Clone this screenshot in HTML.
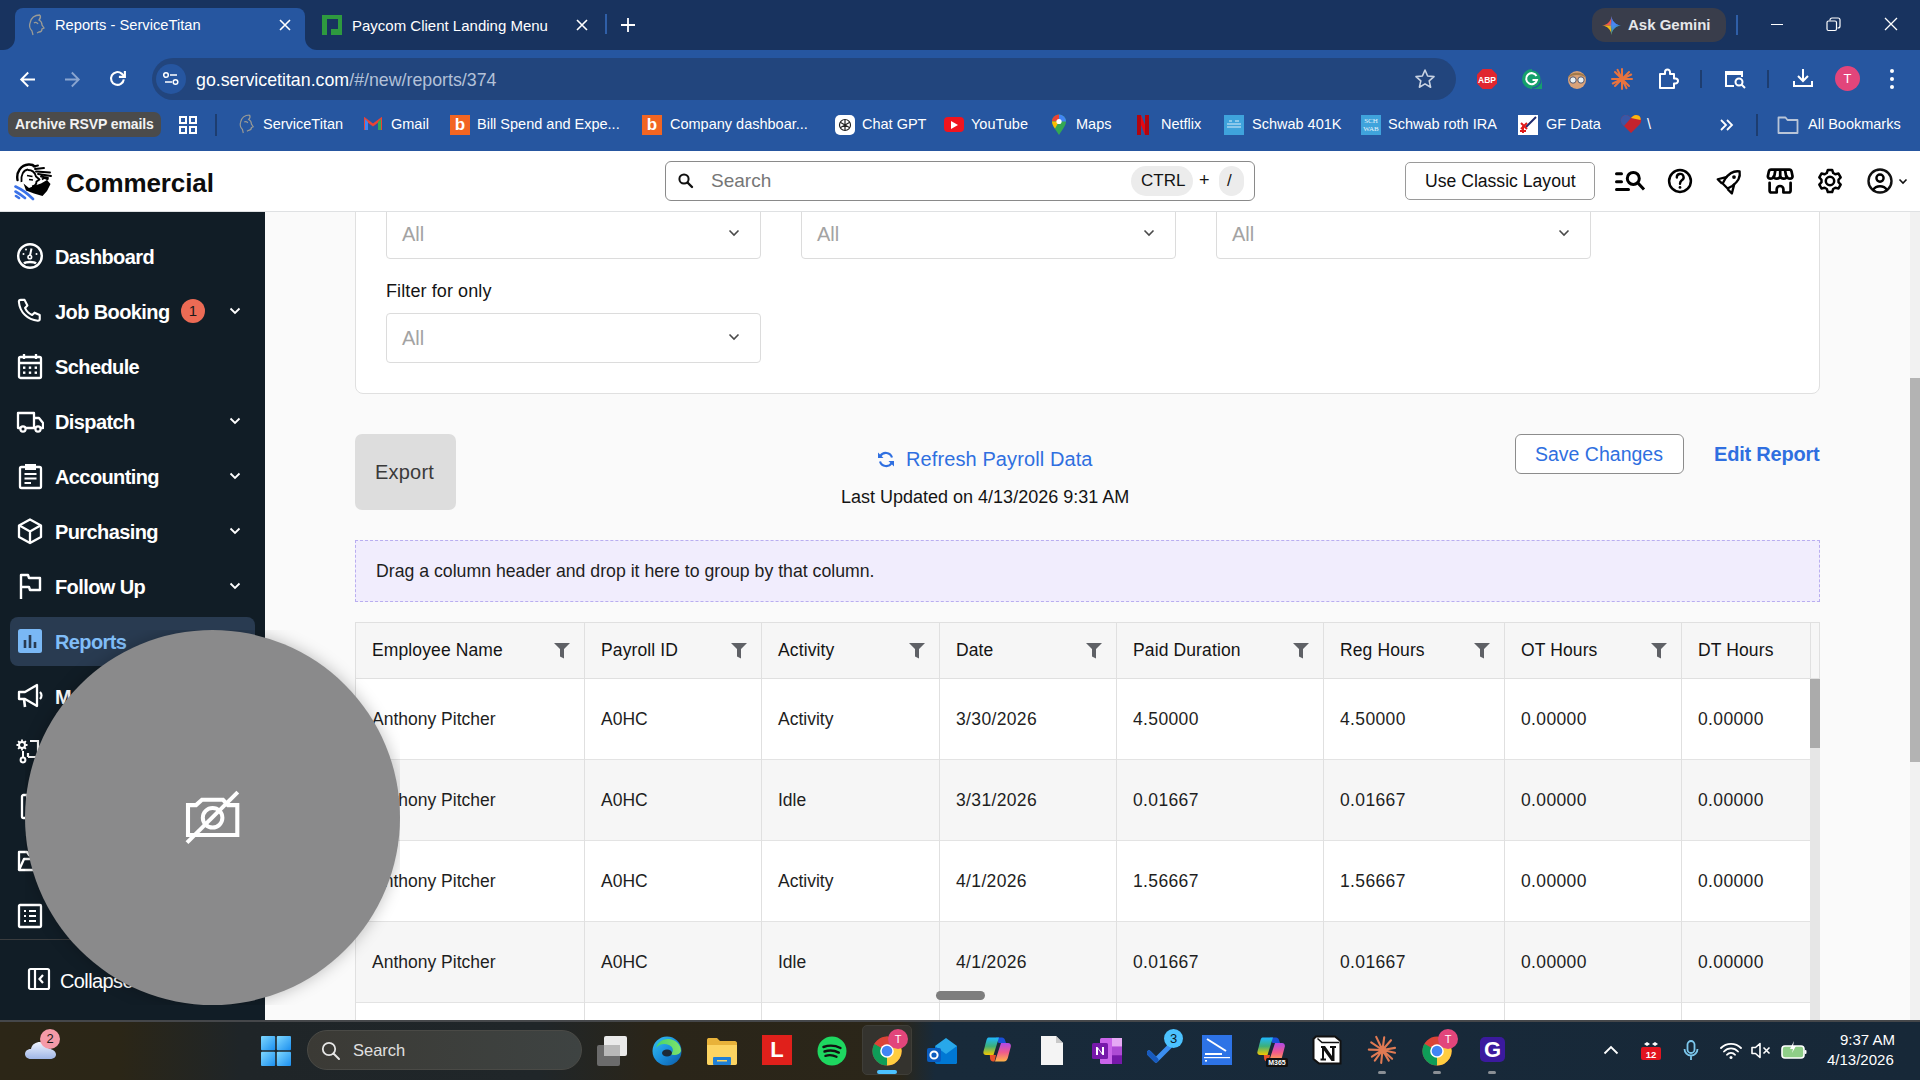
<!DOCTYPE html>
<html><head><meta charset="utf-8">
<style>
*{box-sizing:border-box;margin:0;padding:0}
html,body{width:1920px;height:1080px;overflow:hidden;font-family:"Liberation Sans",sans-serif;background:#fafafa}
.a{position:absolute}
#tabs{left:0;top:0;width:1920px;height:50px;background:#18335f}
#toolbar{left:0;top:50px;width:1920px;height:101px;background:#2656a0}
#hdr{left:0;top:151px;width:1920px;height:61px;background:#fff;border-bottom:1px solid #dfe1e3}
#side{left:0;top:212px;width:265px;height:808px;background:#111d26;overflow:hidden}
#content{left:265px;top:212px;width:1655px;height:808px;background:#fafafa;overflow:hidden}
#taskbar{left:0;top:1020px;width:1920px;height:60px;background:linear-gradient(90deg,#2c2617 0px,#2b2617 120px,#1f2528 240px,#202629 540px,#2a2519 650px,#2b2619 900px,#182a3a 935px,#172838 1920px)}
.t{white-space:nowrap}
.th{top:428px;font-size:17.5px;color:#141414;letter-spacing:0.12px}
.td{font-size:17.5px;color:#1e1e1e}
.sl{left:55px;font-size:20px;font-weight:bold;color:#fff;letter-spacing:-0.6px}
.bk{top:66px;font-size:14.5px;color:#fff}
</style></head><body>
<div id="tabs" class="a">
  <!-- active tab -->
  <div class="a" style="left:15px;top:8px;width:290px;height:42px;background:#2656a0;border-radius:8px 8px 0 0"></div>
  <div class="a" style="left:3px;top:38px;width:12px;height:12px;background:#2656a0;overflow:hidden"><div class="a" style="left:-12px;top:-12px;width:24px;height:24px;border-radius:50%;background:#18335f"></div></div>
  <div class="a" style="left:305px;top:38px;width:12px;height:12px;background:#2656a0;overflow:hidden"><div class="a" style="left:0;top:-12px;width:24px;height:24px;border-radius:50%;background:#18335f"></div></div>
  <svg class="a" style="left:26px;top:14px" width="20" height="22" viewBox="0 0 20 22"><path d="M14 1c-5 0-9 3-10 8-1 3 0 6 2 8l1 4m7-20c1 2 0 4-1 5 2 1 3 3 3 5l2 3-2 1c0 2-1 3-3 3l-2 1M8 9c1-1 3-1 4 1" fill="none" stroke="#9b9b95" stroke-width="1.3"/></svg>
  <div class="a t" style="left:55px;top:17px;font-size:14.7px;color:#fff">Reports - ServiceTitan</div>
  <svg class="a" style="left:279px;top:19px" width="12" height="12" viewBox="0 0 12 12"><path d="M1 1L11 11M11 1L1 11" stroke="#fff" stroke-width="1.6"/></svg>
  <!-- paycom tab -->
  <div class="a" style="left:322px;top:15px;width:20px;height:20px;background:#2e9a3f"></div>
  <div class="a" style="left:327px;top:19px;width:11px;height:10px;background:#18335f"></div>
  <div class="a" style="left:327px;top:29px;width:4px;height:6px;background:#18335f"></div>
  <div class="a t" style="left:352px;top:17px;font-size:15px;color:#fff">Paycom Client Landing Menu</div>
  <svg class="a" style="left:576px;top:19px" width="12" height="12" viewBox="0 0 12 12"><path d="M1 1L11 11M11 1L1 11" stroke="#fff" stroke-width="1.6"/></svg>
  <div class="a" style="left:605px;top:14px;width:2px;height:20px;background:#2f5fa8"></div>
  <svg class="a" style="left:620px;top:17px" width="16" height="16" viewBox="0 0 16 16"><path d="M8 1V15M1 8H15" stroke="#fff" stroke-width="1.8"/></svg>
  <!-- gemini -->
  <div class="a" style="left:1592px;top:8px;width:134px;height:34px;border-radius:13px;background:#393d4b"></div>
  <svg class="a" style="left:1602px;top:16px" width="19" height="19" viewBox="0 0 18 18"><defs><clipPath id="gst"><path d="M9 0C9.5 5 13 8.5 18 9 13 9.5 9.5 13 9 18 8.5 13 5 9.5 0 9 5 8.5 8.5 5 9 0Z"/></clipPath><radialGradient id="gc" cx=".55" cy=".5" r=".35"><stop offset="0" stop-color="#4a8af4"/><stop offset="1" stop-color="#4a8af4" stop-opacity="0"/></radialGradient></defs><g clip-path="url(#gst)"><rect x="0" y="0" width="9" height="9" fill="#f2544a"/><rect x="9" y="0" width="9" height="9" fill="#4a7df0"/><rect x="0" y="9" width="9" height="9" fill="#f5b912"/><rect x="9" y="9" width="9" height="9" fill="#35a955"/><path d="M9 0L18 9 9 18Z" fill="#4285f4" opacity=".7"/><circle cx="10" cy="9" r="6" fill="url(#gc)"/></g></svg>
  <div class="a t" style="left:1628px;top:16px;font-size:15px;font-weight:bold;color:#e6e7ea">Ask Gemini</div>
  <div class="a" style="left:1736px;top:15px;width:2px;height:20px;background:#2f5fa8"></div>
  <div class="a" style="left:1771px;top:24px;width:12px;height:1px;background:#fff"></div>
  <svg class="a" style="left:1826px;top:17px" width="15" height="15" viewBox="0 0 15 15"><rect x="1" y="4" width="9.5" height="9.5" rx="1.5" fill="none" stroke="#fff" stroke-width="1.2"/><path d="M4 3.5V3a2 2 0 012-2h6a2 2 0 012 2v6a2 2 0 01-2 2h-.5" fill="none" stroke="#fff" stroke-width="1.2"/></svg>
  <svg class="a" style="left:1884px;top:17px" width="14" height="14" viewBox="0 0 14 14"><path d="M1 1L13 13M13 1L1 13" stroke="#fff" stroke-width="1.3"/></svg>
</div>
<div id="toolbar" class="a">
  <svg class="a" style="left:18px;top:19px" width="20" height="20" viewBox="0 0 20 20"><path d="M17 10.5H3.5M10.2 3.5L3.2 10.5 10.2 17.5" fill="none" stroke="#fff" stroke-width="1.9"/></svg>
  <svg class="a" style="left:62px;top:19px" width="20" height="20" viewBox="0 0 20 20"><path d="M3 10.5H16.5M9.8 3.5L16.8 10.5 9.8 17.5" fill="none" stroke="#8aa5d0" stroke-width="1.8"/></svg>
  <svg class="a" style="left:107px;top:19px" width="22" height="20" viewBox="0 0 22 20"><path d="M16.8 10.3A6.4 6.4 0 1 1 14.6 4.6L17.3 7.3" fill="none" stroke="#fff" stroke-width="2.1"/><path d="M11.9 7.9H17.9V1.9" fill="none" stroke="#fff" stroke-width="2.1"/></svg>
  <div class="a" style="left:152px;top:8px;width:1304px;height:42px;border-radius:21px;background:#22457d"></div>
  <div class="a" style="left:156px;top:14px;width:30px;height:30px;border-radius:15px;background:#2656a0"></div>
  <svg class="a" style="left:162px;top:20px" width="18" height="18" viewBox="0 0 18 18"><circle cx="4" cy="5" r="2.3" fill="none" stroke="#fff" stroke-width="1.5"/><path d="M8 5H15M3 12H10" stroke="#fff" stroke-width="1.5"/><circle cx="13.5" cy="12" r="2.3" fill="none" stroke="#fff" stroke-width="1.5"/></svg>
  <div class="a t" style="left:196px;top:20px;font-size:17.8px;color:#fff">go.servicetitan.com<span style="color:#b3c1d8">/#/new/reports/374</span></div>
  <svg class="a" style="left:1414px;top:18px" width="22" height="22" viewBox="0 0 22 22"><path d="M11 2L13.6 8 20 8.6 15.2 12.9 16.6 19.2 11 15.9 5.4 19.2 6.8 12.9 2 8.6 8.4 8Z" fill="none" stroke="#c9d3e3" stroke-width="1.6" stroke-linejoin="round"/></svg>
  <!-- extensions -->
  <svg class="a" style="left:1476px;top:18px" width="22" height="22" viewBox="0 0 22 22"><path d="M6.5 1H15.5L21 6.5V15.5L15.5 21H6.5L1 15.5V6.5Z" fill="#e0262f"/><text x="11" y="14.5" font-size="8.5" font-weight="bold" fill="#fff" text-anchor="middle" font-family="Liberation Sans">ABP</text></svg>
  <svg class="a" style="left:1521px;top:18px" width="22" height="22" viewBox="0 0 22 22"><path d="M11 1A10 10 0 1 0 21 11V21H11Z" fill="#15a06d"/><circle cx="11" cy="11" r="8.5" fill="#15a06d" stroke="#fff" stroke-width="0"/><path d="M15.5 8A5.5 5.5 0 1 0 16 12H11.5" fill="none" stroke="#fff" stroke-width="2"/></svg>
  <svg class="a" style="left:1566px;top:18px" width="22" height="22" viewBox="0 0 22 22"><circle cx="11" cy="12" r="9" fill="#d9a279"/><path d="M2 10C3 3 19 3 20 10 17 6 5 6 2 10Z" fill="#a37a4a"/><circle cx="7" cy="12" r="3.2" fill="#e9f0f4" stroke="#556" stroke-width="1"/><circle cx="15" cy="12" r="3.2" fill="#e9f0f4" stroke="#556" stroke-width="1"/></svg>
  <svg class="a" style="left:1611px;top:18px" width="22" height="22" viewBox="0 0 22 22"><g stroke="#e8733f" stroke-width="2" stroke-linecap="round"><path d="M11 1V21M1 11H21M4 4L18 18M18 4L4 18M6.5 1.8L15.5 20.2M1.8 15.5L20.2 6.5"/></g></svg>
  <svg class="a" style="left:1657px;top:18px" width="22" height="22" viewBox="0 0 22 22"><path d="M3 6H8V4a2.5 2.5 0 015 0V6H17V10.5H18.5a2.5 2.5 0 010 5H17V20H3Z" fill="none" stroke="#fff" stroke-width="2" stroke-linejoin="round"/></svg>
  <div class="a" style="left:1700px;top:20px;width:2px;height:18px;background:#1d3d70"></div>
  <svg class="a" style="left:1723px;top:18px" width="24" height="22" viewBox="0 0 24 22"><path d="M11 18H3V4H19V9" fill="none" stroke="#fff" stroke-width="2"/><rect x="3" y="4" width="16" height="3" fill="#fff"/><circle cx="16" cy="14" r="3.5" fill="none" stroke="#fff" stroke-width="2"/><path d="M18.5 16.5L22 20" stroke="#fff" stroke-width="2"/></svg>
  <div class="a" style="left:1767px;top:20px;width:2px;height:18px;background:#1d3d70"></div>
  <svg class="a" style="left:1792px;top:17px" width="22" height="22" viewBox="0 0 22 22"><path d="M11 2V14M6 9L11 14 16 9M2 14V19H20V14" fill="none" stroke="#fff" stroke-width="2"/></svg>
  <div class="a" style="left:1835px;top:16px;width:25px;height:25px;border-radius:50%;background:#e2457b;color:#fff;font-size:13px;text-align:center;line-height:25px">T</div>
  <svg class="a" style="left:1888px;top:18px" width="8" height="22" viewBox="0 0 8 22"><circle cx="4" cy="3" r="2" fill="#fff"/><circle cx="4" cy="11" r="2" fill="#fff"/><circle cx="4" cy="19" r="2" fill="#fff"/></svg>
  <!-- bookmarks -->
  <div class="a" style="left:8px;top:62px;width:153px;height:25px;border-radius:7px;background:#4b4b4b"></div>
  <div class="a t" style="left:15px;top:66px;font-size:14px;font-weight:bold;color:#f2f2f2;letter-spacing:-0.1px">Archive RSVP emails</div>
  <svg class="a" style="left:178px;top:65px" width="20" height="20" viewBox="0 0 20 20"><g fill="none" stroke="#fff" stroke-width="2"><rect x="2" y="2" width="6" height="6"/><rect x="12" y="2" width="6" height="6"/><rect x="2" y="12" width="6" height="6"/><rect x="12" y="12" width="6" height="6"/></g></svg>
  <div class="a" style="left:215px;top:64px;width:2px;height:22px;background:#1d3d70"></div>
  <svg class="a" style="left:237px;top:64px" width="18" height="20" viewBox="0 0 20 22"><path d="M14 1c-5 0-9 3-10 8-1 3 0 6 2 8l1 4m7-20c1 2 0 4-1 5 2 1 3 3 3 5l2 3-2 1c0 2-1 3-3 3l-2 1M8 9c1-1 3-1 4 1" fill="none" stroke="#9b9b95" stroke-width="1.3"/></svg>
  <div class="a t bk" style="left:263px">ServiceTitan</div>
  <svg class="a" style="left:364px;top:67px" width="18" height="14" viewBox="0 0 18 14"><path d="M1 13V2L9 8 17 2V13" fill="none" stroke="#ea4335" stroke-width="2.4"/><path d="M1 2V13H4V5" fill="#4285f4"/><path d="M14 5V13H17V2" fill="#34a853"/></svg>
  <div class="a t bk" style="left:391px">Gmail</div>
  <div class="a" style="left:450px;top:65px;width:20px;height:20px;background:#f26522;color:#fff;font-weight:bold;font-size:17px;line-height:20px;text-align:center">b</div>
  <div class="a t bk" style="left:477px">Bill Spend and Expe...</div>
  <div class="a" style="left:642px;top:65px;width:20px;height:20px;background:#f26522;color:#fff;font-weight:bold;font-size:17px;line-height:20px;text-align:center">b</div>
  <div class="a t bk" style="left:670px">Company dashboar...</div>
  <div class="a" style="left:835px;top:65px;width:20px;height:20px;border-radius:5px;background:#fff"></div>
  <svg class="a" style="left:837px;top:67px" width="16" height="16" viewBox="0 0 16 16"><g fill="none" stroke="#222" stroke-width="1.2"><circle cx="8" cy="8" r="5.5"/><path d="M8 2.5V8M3.2 5.3L8 8M3.2 10.7L8 8M8 13.5V8M12.8 10.7L8 8M12.8 5.3L8 8"/></g></svg>
  <div class="a t bk" style="left:862px">Chat GPT</div>
  <div class="a" style="left:944px;top:67px;width:20px;height:15px;border-radius:4px;background:#f0141e"></div>
  <svg class="a" style="left:951px;top:71px" width="7" height="8" viewBox="0 0 7 8"><path d="M0 0L7 4 0 8Z" fill="#fff"/></svg>
  <div class="a t bk" style="left:971px">YouTube</div>
  <svg class="a" style="left:1051px;top:64px" width="16" height="22" viewBox="0 0 16 22"><path d="M8 21C4 15 1 11 1 7.5A7 7 0 0115 7.5C15 11 12 15 8 21Z" fill="#34a853"/><path d="M1 7.5A7 7 0 018 .5V7Z" fill="#ea4335"/><path d="M8 .5A7 7 0 0115 7.5H8Z" fill="#4285f4"/><path d="M1 7.5C1 10 2.5 12.5 4 14.5L8 7.5Z" fill="#fbbc04"/><circle cx="8" cy="7.5" r="2.6" fill="#fff"/></svg>
  <div class="a t bk" style="left:1076px">Maps</div>
  <svg class="a" style="left:1136px;top:64px" width="14" height="22" viewBox="0 0 14 22"><path d="M1 1H5L13 21H9Z" fill="#e50914"/><path d="M1 1H5V21H1ZM9 1H13V21H9Z" fill="#b1060f"/></svg>
  <div class="a t bk" style="left:1161px">Netflix</div>
  <div class="a" style="left:1224px;top:65px;width:20px;height:20px;background:#3fa3dc"></div>
  <svg class="a" style="left:1226px;top:70px" width="16" height="10" viewBox="0 0 16 10"><path d="M1 4H15M1 7H15" stroke="#d9eef9" stroke-width="1.2"/><path d="M3 1H6M9 1H13" stroke="#d9eef9" stroke-width="1"/></svg>
  <div class="a t bk" style="left:1252px">Schwab 401K</div>
  <div class="a" style="left:1361px;top:65px;width:20px;height:20px;background:#3fa3dc"></div>
  <div class="a" style="left:1362px;top:67px;width:18px;font-family:'Liberation Serif',serif;font-size:7px;color:#e6f3fb;line-height:8px;text-align:center">SCH<br>WAB</div>
  <div class="a t bk" style="left:1388px">Schwab roth IRA</div>
  <div class="a" style="left:1518px;top:65px;width:20px;height:20px;background:#fff"></div>
  <svg class="a" style="left:1518px;top:65px" width="20" height="20" viewBox="0 0 20 20"><path d="M18 2L8 12" stroke="#1e2a6e" stroke-width="2"/><path d="M3 8L9 14M9 8L3 14M5 11V18M2 16H8" stroke="#e01b1b" stroke-width="2"/></svg>
  <div class="a t bk" style="left:1546px">GF Data</div>
  <svg class="a" style="left:1620px;top:64px" width="22" height="20" viewBox="0 0 22 20"><path d="M11 19L2 10C-1 6 2 1 6 1 8 1 10 2.5 11 4 12 2.5 14 1 16 1 20 1 23 6 20 10Z" fill="#c4232e"/><path d="M2 10C-1 6 2 1 6 1 8 1 10 2.5 11 4L4 12Z" fill="#3957a6"/><path d="M11 4C12 2.5 14 1 16 1 20 1 21 4 20.5 6Z" fill="#f9b612"/></svg>
  <div class="a t bk" style="left:1647px">\</div>
  <svg class="a" style="left:1720px;top:69px" width="14" height="12" viewBox="0 0 14 12"><path d="M1 1L6 6 1 11M7 1L12 6 7 11" fill="none" stroke="#fff" stroke-width="1.8"/></svg>
  <div class="a" style="left:1756px;top:64px;width:2px;height:22px;background:#1d3d70"></div>
  <svg class="a" style="left:1777px;top:65px" width="22" height="20" viewBox="0 0 22 20"><path d="M1.5 2.5H8.5L10.5 5H20.5V18H1.5Z" fill="none" stroke="#b9c5d8" stroke-width="1.8" stroke-linejoin="round"/></svg>
  <div class="a t bk" style="left:1808px">All Bookmarks</div>
</div>
<div id="hdr" class="a">
  <svg class="a" style="left:14px;top:12px" width="40" height="38" viewBox="0 0 40 38">
    <path d="M3.5 17C2 9 7 2 14.5 1.5 17.5 1.3 19.5 2 21 3.5" fill="none" stroke="#000" stroke-width="2.4" stroke-linecap="round"/>
    <path d="M7.5 19C6.5 12 9.5 7 14 6.5" fill="none" stroke="#000" stroke-width="1.8"/>
    <path d="M19.5 3.5L24 2.5M21 6L30 5M22 8.5L36 9.5M24 11L37 13M27 13.5L34 15" fill="none" stroke="#000" stroke-width="1.9" stroke-linecap="round"/>
    <path d="M14 7C18 7 21 9.5 22 13.5L25.5 16.5 22.5 18.5C22.5 21 21 23 18 23.5" fill="none" stroke="#000" stroke-width="1.9" stroke-linejoin="round"/>
    <path d="M13 12.5L18.5 13.5M15 16.5L19 17" stroke="#000" stroke-width="1.6"/>
    <path d="M9.5 20.5L15 25 21 22.5 27 20.5 33 17 36.5 21 33 28 28.5 33 20 30.5 12 27.5Z" fill="#000"/>
    <path d="M28 16.5C30 14.5 33 15 34 17" fill="none" stroke="#000" stroke-width="1.8"/>
    <path d="M1.5 23.5C7 26 13 30 19 36M1.5 28.5C5 30.5 8 32.5 11 35M2 33L5 35" fill="none" stroke="#3b72e8" stroke-width="2.6" stroke-linecap="round"/>
  </svg>
  <div class="a t" style="left:66px;top:17px;font-size:26px;font-weight:bold;color:#0d0d0d;letter-spacing:-0.1px">Commercial</div>
  <div class="a" style="left:665px;top:10px;width:590px;height:40px;border:1px solid #8a8a8a;border-radius:6px;background:#fff"></div>
  <svg class="a" style="left:677px;top:21px" width="18" height="18" viewBox="0 0 18 18"><circle cx="7" cy="7" r="4.6" fill="none" stroke="#111" stroke-width="2"/><path d="M10.5 10.5L15 15" stroke="#111" stroke-width="2.4" stroke-linecap="round"/></svg>
  <div class="a t" style="left:711px;top:19px;font-size:19px;color:#767676">Search</div>
  <div class="a" style="left:1131px;top:15px;width:62px;height:30px;border-radius:15px;background:#ececec"></div>
  <div class="a t" style="left:1141px;top:20px;font-size:17px;color:#141414">CTRL</div>
  <div class="a t" style="left:1199px;top:19px;font-size:18px;color:#141414">+</div>
  <div class="a" style="left:1219px;top:15px;width:25px;height:30px;border-radius:13px;background:#ececec"></div>
  <div class="a t" style="left:1227px;top:20px;font-size:17px;color:#141414">/</div>
  <div class="a" style="left:1405px;top:11px;width:190px;height:38px;border:1px solid #9a9a9a;border-radius:5px;background:#fff"></div>
  <div class="a t" style="left:1425px;top:20px;font-size:17.6px;color:#101010">Use Classic Layout</div>
  <!-- icons -->
  <svg class="a" style="left:1613px;top:16px" width="34" height="28" viewBox="0 0 34 28"><path d="M3.5 6.8H8.5M3.5 14.75H8.5M3.5 22.5H15.5" stroke="#000" stroke-width="3" stroke-linecap="round"/><circle cx="20.3" cy="11.4" r="6" fill="none" stroke="#000" stroke-width="3"/><path d="M25 16L30 21.5" stroke="#000" stroke-width="3" stroke-linecap="square"/></svg>
  <svg class="a" style="left:1666px;top:16px" width="28" height="28" viewBox="0 0 28 28"><circle cx="14" cy="14" r="10.9" fill="none" stroke="#000" stroke-width="2.5"/><path d="M10.8 10.5A3.4 3.4 0 1 1 15.8 13.3C14.6 14.2 14 15 14 16.8" fill="none" stroke="#000" stroke-width="2.4" stroke-linecap="round"/><circle cx="14" cy="20.4" r="1.4" fill="#000"/></svg>
  <svg class="a" style="left:1713px;top:14px" width="32" height="32" viewBox="0 0 32 32"><g transform="translate(18.5 14.6) rotate(45)" fill="none" stroke="#000" stroke-width="2.3" stroke-linejoin="round"><path d="M0 -11.5C5 -8 6 -2 5 4L3.5 9H-3.5L-5 4C-6 -2 -5 -8 0 -11.5Z"/><path d="M-5 1L-10 9.5H-3.8M5 1L10 9.5H3.8"/></g><circle cx="21" cy="12.1" r="1.9" fill="#000"/></svg>
  <svg class="a" style="left:1765px;top:15px" width="30" height="30" viewBox="0 0 30 30"><g fill="none" stroke="#000" stroke-width="2.7" stroke-linejoin="round" stroke-linecap="round"><path d="M6 3.7H24.5C25.8 3.7 26.3 4.5 26.6 5.8L27.5 10C27.7 11.6 26.5 12.7 25 12.7 23.5 12.7 22.3 11.8 21.9 10.6 21.5 11.8 20.3 12.7 18.7 12.7 17.1 12.7 15.7 11.8 15.2 10.6 14.7 11.8 13.3 12.7 11.7 12.7 10.1 12.7 8.9 11.8 8.5 10.6 8.1 11.8 6.9 12.7 5.4 12.7 3.9 12.7 2.7 11.6 2.9 10L3.8 5.8C4.1 4.5 4.6 3.7 6 3.7Z"/><path d="M10.3 4.5L9.3 10M15.2 4.5V10M20.1 4.5L21.1 10"/><path d="M4.6 16.8V24.5C4.6 25.7 5.4 26.5 6.6 26.5H11.7V23.35A3.35 3.35 0 0 1 18.4 23.35V26.5H23.6C24.8 26.5 25.6 25.7 25.6 24.5V16.8"/></g></svg>
  <svg class="a" style="left:1816px;top:16px" width="28" height="28" viewBox="0 0 28 28"><path d="M12 2H16L16.8 5.4 19.6 6.8 22.6 5 25.3 7.8 23.4 10.7 24.6 13.6 28 14.3V18 L24.6 18.6 23.4 21.4 25.2 24.4 22.4 27 19.5 25.2 16.6 26.4 16 29H12" transform="scale(0.97) translate(0,-1)" fill="none" stroke="#111" stroke-width="0"/>
    <g transform="translate(14 14)"><path d="M-3.22 -7.97 L-2.16 -11.09 L2.16 -11.09 L3.22 -7.97 L5.29 -6.78 L8.53 -7.41 L10.68 -3.68 L8.52 -1.20 L8.52 1.20 L10.68 3.68 L8.53 7.41 L5.29 6.78 L3.22 7.97 L2.16 11.09 L-2.16 11.09 L-3.22 7.97 L-5.29 6.78 L-8.53 7.41 L-10.68 3.68 L-8.52 1.20 L-8.52 -1.20 L-10.68 -3.68 L-8.53 -7.41 L-5.29 -6.78Z" fill="none" stroke="#000" stroke-width="2.5" stroke-linejoin="round"/><circle r="4.2" fill="none" stroke="#000" stroke-width="2.5"/></g></svg>
  <svg class="a" style="left:1866px;top:16px" width="28" height="28" viewBox="0 0 28 28"><circle cx="14" cy="14" r="11.5" fill="none" stroke="#111" stroke-width="2.4"/><circle cx="14" cy="11.1" r="3.6" fill="none" stroke="#000" stroke-width="2.4"/><path d="M6.8 23C8.8 20.2 11.2 19.2 14 19.2S19.2 20.2 21.2 23" fill="none" stroke="#000" stroke-width="2.4"/></svg>
  <svg class="a" style="left:1898px;top:27px" width="10" height="7" viewBox="0 0 10 7"><path d="M1.5 1.5L5 5 8.5 1.5" fill="none" stroke="#111" stroke-width="1.6"/></svg>
</div>
<div id="side" class="a">
<svg class="a" style="left:16px;top:30px" width="28" height="28" viewBox="0 0 28 28"><circle cx="14" cy="14" r="11.8" fill="none" stroke="#fff" stroke-width="2.4"/><path d="M8 21.5C10 19.5 18 19.5 20 21.5" fill="none" stroke="#fff" stroke-width="2.4"/><path d="M15.5 6.5L14 13.5" stroke="#fff" stroke-width="2"/><circle cx="13.8" cy="15" r="1.8" fill="none" stroke="#fff" stroke-width="1.6"/><circle cx="7.5" cy="12" r="1" fill="#fff"/><circle cx="20.5" cy="12" r="1" fill="#fff"/><circle cx="10" cy="7.5" r="1" fill="#fff"/></svg>
<div class="a t sl" style="top:34px">Dashboard</div>
<svg class="a" style="left:16px;top:85px" width="28" height="28" viewBox="0 0 28 28"><path d="M5 3H9L12 9 9.5 11.5C11 15 13.5 17.5 17 19L19.5 16.5 25 19V23.5C25 24.5 24 25 23 25 12 24 4 16 3 5 3 4 4 3 5 3Z" fill="none" stroke="#fff" stroke-width="2.2" stroke-linejoin="round" transform="scale(0.95)"/></svg>
<div class="a t sl" style="top:89px">Job Booking</div>
<svg class="a" style="left:229px;top:95px" width="12" height="8" viewBox="0 0 12 8"><path d="M1.5 1.5L6 6 10.5 1.5" fill="none" stroke="#fff" stroke-width="1.8"/></svg>
<svg class="a" style="left:16px;top:140px" width="28" height="28" viewBox="0 0 28 28"><rect x="3" y="5" width="22" height="21" rx="1.5" fill="none" stroke="#fff" stroke-width="2.3"/><path d="M3 11H25M8 2V7M20 2V7" stroke="#fff" stroke-width="2.3"/><g fill="#fff"><rect x="7" y="14.5" width="2.4" height="2.4"/><rect x="12.8" y="14.5" width="2.4" height="2.4"/><rect x="18.6" y="14.5" width="2.4" height="2.4"/><rect x="7" y="19.5" width="2.4" height="2.4"/><rect x="12.8" y="19.5" width="2.4" height="2.4"/><rect x="18.6" y="19.5" width="2.4" height="2.4"/></g></svg>
<div class="a t sl" style="top:144px">Schedule</div>
<svg class="a" style="left:16px;top:195px" width="28" height="28" viewBox="0 0 28 28"><path d="M2 6H18V21H2ZM18 11H23L27 16V21H18" fill="none" stroke="#fff" stroke-width="2.3" stroke-linejoin="round"/><circle cx="7" cy="22" r="2.6" fill="#111c26" stroke="#fff" stroke-width="2.2"/><circle cx="22" cy="22" r="2.6" fill="#111c26" stroke="#fff" stroke-width="2.2"/></svg>
<div class="a t sl" style="top:199px">Dispatch</div>
<svg class="a" style="left:229px;top:205px" width="12" height="8" viewBox="0 0 12 8"><path d="M1.5 1.5L6 6 10.5 1.5" fill="none" stroke="#fff" stroke-width="1.8"/></svg>
<svg class="a" style="left:16px;top:250px" width="28" height="28" viewBox="0 0 28 28"><rect x="4" y="5" width="21" height="21" rx="1.5" fill="none" stroke="#fff" stroke-width="2.3"/><path d="M10 3H19V7H10Z" fill="none" stroke="#fff" stroke-width="2"/><path d="M8.5 12H20.5M8.5 16.5H20.5M8.5 21H15" stroke="#fff" stroke-width="2.2"/></svg>
<div class="a t sl" style="top:254px">Accounting</div>
<svg class="a" style="left:229px;top:260px" width="12" height="8" viewBox="0 0 12 8"><path d="M1.5 1.5L6 6 10.5 1.5" fill="none" stroke="#fff" stroke-width="1.8"/></svg>
<svg class="a" style="left:16px;top:305px" width="28" height="28" viewBox="0 0 28 28"><path d="M14 2.5L25 8.5V20L14 26 3 20V8.5Z" fill="none" stroke="#fff" stroke-width="2.3" stroke-linejoin="round"/><path d="M3.5 8.5L14 14.5 24.5 8.5M14 14.5V26" fill="none" stroke="#fff" stroke-width="2.3"/></svg>
<div class="a t sl" style="top:309px">Purchasing</div>
<svg class="a" style="left:229px;top:315px" width="12" height="8" viewBox="0 0 12 8"><path d="M1.5 1.5L6 6 10.5 1.5" fill="none" stroke="#fff" stroke-width="1.8"/></svg>
<svg class="a" style="left:16px;top:360px" width="28" height="28" viewBox="0 0 28 28"><path d="M5 27V3H12L13 6H24V18H14L13 15H5" fill="none" stroke="#fff" stroke-width="2.4" stroke-linejoin="round" transform="translate(0 0)"/></svg>
<div class="a t sl" style="top:364px">Follow Up</div>
<svg class="a" style="left:229px;top:370px" width="12" height="8" viewBox="0 0 12 8"><path d="M1.5 1.5L6 6 10.5 1.5" fill="none" stroke="#fff" stroke-width="1.8"/></svg>
<div class="a" style="left:181px;top:87px;width:24px;height:24px;border-radius:12px;background:#ec6b55;color:#1a1a1a;font-size:15px;line-height:24px;text-align:center">1</div>
<div class="a" style="left:10px;top:405px;width:245px;height:49px;border-radius:8px;background:#293b51"></div>
<svg class="a" style="left:18px;top:417px" width="24" height="24" viewBox="0 0 24 24"><rect x="0" y="0" width="24" height="24" rx="2.5" fill="#7ab8f5"/><path d="M7 11V19M12 6V19M17 13V19" stroke="#293b51" stroke-width="2.6"/></svg>
<div class="a t sl" style="top:419px;color:#80bdf7">Reports</div>
<svg class="a" style="left:16px;top:470px" width="28" height="28" viewBox="0 0 28 28"><path d="M3 10H9L21 3V24L9 17H3Z" fill="none" stroke="#fff" stroke-width="2.3" stroke-linejoin="round"/><path d="M8 17L9 25" stroke="#fff" stroke-width="2.6"/><path d="M24 10C26 12 26 15 24 17" fill="none" stroke="#fff" stroke-width="2.2"/></svg>
<div class="a t sl" style="top:474px">Marketing</div>
<svg class="a" style="left:16px;top:525px" width="28" height="28" viewBox="0 0 28 28"><g transform="translate(6 8)"><circle r="3" fill="none" stroke="#fff" stroke-width="2"/><path d="M0-5.5V-3.5M0 3.5V5.5M-5.5 0H-3.5M3.5 0H5.5M-3.9-3.9L-2.5-2.5M2.5 2.5L3.9 3.9M-3.9 3.9L-2.5 2.5M2.5-2.5L3.9-3.9" stroke="#fff" stroke-width="1.8"/></g><path d="M14 4H22V20H12M12 20V16" fill="none" stroke="#fff" stroke-width="2.2"/><circle cx="7" cy="23" r="2.4" fill="none" stroke="#fff" stroke-width="2"/><path d="M7 14V20.5" stroke="#fff" stroke-width="2"/><path d="M22 10H26M22 14H26" stroke="#fff" stroke-width="2"/></svg>
<div class="a t sl" style="top:529px">Settings</div>
<svg class="a" style="left:17px;top:580px" width="28" height="28" viewBox="0 0 28 28"><rect x="5" y="3" width="19" height="23" rx="1.5" fill="none" stroke="#fff" stroke-width="2.3"/><path d="M10 3V12L13 10 16 12V3" fill="none" stroke="#fff" stroke-width="2"/></svg>
<div class="a t sl" style="top:584px">Pricebook</div>
<svg class="a" style="left:16px;top:635px" width="28" height="28" viewBox="0 0 28 28"><path d="M3 23V5H11L13 8H24V12" fill="none" stroke="#fff" stroke-width="2.3" stroke-linejoin="round"/><path d="M3 23L8 12H26L21 23Z" fill="none" stroke="#fff" stroke-width="2.3" stroke-linejoin="round"/></svg>
<div class="a t sl" style="top:639px">Documents</div>
<svg class="a" style="left:16px;top:690px" width="28" height="28" viewBox="0 0 28 28"><rect x="3" y="3" width="22" height="22" rx="1" fill="none" stroke="#fff" stroke-width="2.3"/><path d="M8 9H10M8 14H10M8 19H10M13 9H20M13 14H20M13 19H20" stroke="#fff" stroke-width="2.2"/></svg>
<div class="a t sl" style="left:59px;top:694px">Forms</div>
<div class="a" style="left:0;top:727px;width:265px;height:1px;background:#3a3c3e"></div>
<svg class="a" style="left:27px;top:755px" width="24" height="24" viewBox="0 0 24 24"><rect x="2" y="2" width="20" height="20" rx="1.5" fill="none" stroke="#fff" stroke-width="2.2"/><path d="M8 2V22M16 8L12.5 12 16 16" fill="none" stroke="#fff" stroke-width="2.2"/></svg>
<div class="a t sl" style="left:60px;top:758px;font-weight:normal">Collapse</div>
</div>
<div id="content" class="a">
<div class="a" style="left:1645px;top:0;width:10px;height:808px;background:#f1f1f1"></div>
<div class="a" style="left:1645px;top:166px;width:10px;height:384px;background:#b3b3b3"></div>
<div class="a" style="left:90px;top:-20px;width:1465px;height:202px;background:#fff;border:1px solid #e0e0e0;border-radius:8px"></div>
<div class="a" style="left:121px;top:-10px;width:375px;height:57px;background:#fff;border:1px solid #dcdcdc;border-radius:4px"></div>
<div class="a t" style="left:137px;top:11px;font-size:20px;color:#a3a3a3">All</div>
<svg class="a" style="left:463px;top:17px" width="12" height="8" viewBox="0 0 12 8"><path d="M1.5 1.5L6 6 10.5 1.5" fill="none" stroke="#4a4a4a" stroke-width="1.6"/></svg>
<div class="a" style="left:536px;top:-10px;width:375px;height:57px;background:#fff;border:1px solid #dcdcdc;border-radius:4px"></div>
<div class="a t" style="left:552px;top:11px;font-size:20px;color:#a3a3a3">All</div>
<svg class="a" style="left:878px;top:17px" width="12" height="8" viewBox="0 0 12 8"><path d="M1.5 1.5L6 6 10.5 1.5" fill="none" stroke="#4a4a4a" stroke-width="1.6"/></svg>
<div class="a" style="left:951px;top:-10px;width:375px;height:57px;background:#fff;border:1px solid #dcdcdc;border-radius:4px"></div>
<div class="a t" style="left:967px;top:11px;font-size:20px;color:#a3a3a3">All</div>
<svg class="a" style="left:1293px;top:17px" width="12" height="8" viewBox="0 0 12 8"><path d="M1.5 1.5L6 6 10.5 1.5" fill="none" stroke="#4a4a4a" stroke-width="1.6"/></svg>
<div class="a t" style="left:121px;top:69px;font-size:18px;color:#141414;letter-spacing:0.1px">Filter for only</div>
<div class="a" style="left:121px;top:101px;width:375px;height:50px;background:#fff;border:1px solid #dcdcdc;border-radius:4px"></div>
<div class="a t" style="left:137px;top:115px;font-size:20px;color:#a3a3a3">All</div>
<svg class="a" style="left:463px;top:121px" width="12" height="8" viewBox="0 0 12 8"><path d="M1.5 1.5L6 6 10.5 1.5" fill="none" stroke="#4a4a4a" stroke-width="1.6"/></svg>
<div class="a" style="left:90px;top:222px;width:101px;height:76px;background:#dddddd;border-radius:7px"></div>
<div class="a t" style="left:110px;top:249px;font-size:20px;color:#3a3a3a;letter-spacing:0.2px">Export</div>
<svg class="a" style="left:611px;top:239px" width="20" height="17" viewBox="0 0 20 17"><path d="M16 6.5A6.5 6.5 0 0 0 4.3 5" fill="none" stroke="#2f6fe0" stroke-width="2.2"/><path d="M4 10.5A6.5 6.5 0 0 0 15.7 12" fill="none" stroke="#2f6fe0" stroke-width="2.2"/><path d="M2 1.5V7H7.5Z" fill="#2f6fe0"/><path d="M18 15.5V10H12.5Z" fill="#2f6fe0"/></svg>
<div class="a t" style="left:641px;top:236px;font-size:20px;color:#2f6fe0;letter-spacing:0.1px">Refresh Payroll Data</div>
<div class="a t" style="left:576px;top:275px;font-size:18px;color:#141414">Last Updated on 4/13/2026 9:31 AM</div>
<div class="a" style="left:1250px;top:222px;width:169px;height:40px;background:#fff;border:1px solid #8c8c8c;border-radius:6px"></div>
<div class="a t" style="left:1270px;top:231px;font-size:19.5px;color:#2f6fe0">Save Changes</div>
<div class="a t" style="left:1449px;top:231px;font-size:20px;font-weight:bold;color:#2f6fe0;letter-spacing:-0.2px">Edit Report</div>
<div class="a" style="left:90px;top:328px;width:1465px;height:62px;background:#f1edfd;border:1px dashed #b9aef0"></div>
<div class="a t" style="left:111px;top:349px;font-size:17.7px;color:#1e1e1e">Drag a column header and drop it here to group by that column.</div>
<div class="a" style="left:90px;top:410px;width:1465px;height:500px;background:#fff;border:1px solid #e0e0e0;border-bottom:none"></div>
<div class="a" style="left:91px;top:411px;width:1463px;height:56px;background:#f6f6f6;border-bottom:1px solid #e0e0e0"></div>
<div class="a" style="left:91px;top:467px;width:1454px;height:81px;background:#fff;border-bottom:1px solid #e3e3e3"></div>
<div class="a" style="left:91px;top:548px;width:1454px;height:81px;background:#f6f6f6;border-bottom:1px solid #e3e3e3"></div>
<div class="a" style="left:91px;top:629px;width:1454px;height:81px;background:#fff;border-bottom:1px solid #e3e3e3"></div>
<div class="a" style="left:91px;top:710px;width:1454px;height:81px;background:#f6f6f6;border-bottom:1px solid #e3e3e3"></div>
<div class="a" style="left:319px;top:411px;width:1px;height:500px;background:#e0e0e0"></div>
<div class="a" style="left:496px;top:411px;width:1px;height:500px;background:#e0e0e0"></div>
<div class="a" style="left:674px;top:411px;width:1px;height:500px;background:#e0e0e0"></div>
<div class="a" style="left:851px;top:411px;width:1px;height:500px;background:#e0e0e0"></div>
<div class="a" style="left:1058px;top:411px;width:1px;height:500px;background:#e0e0e0"></div>
<div class="a" style="left:1239px;top:411px;width:1px;height:500px;background:#e0e0e0"></div>
<div class="a" style="left:1416px;top:411px;width:1px;height:500px;background:#e0e0e0"></div>
<div class="a" style="left:1545px;top:411px;width:1px;height:500px;background:#e0e0e0"></div>
<div class="a t th" style="left:107px">Employee Name</div>
<svg class="a" style="left:289px;top:431px" width="16" height="16" viewBox="0 0 16 16"><path d="M0 0H16L10 6V15.5L6 13.5V6Z" fill="#5f6166"/></svg>
<div class="a t th" style="left:336px">Payroll ID</div>
<svg class="a" style="left:466px;top:431px" width="16" height="16" viewBox="0 0 16 16"><path d="M0 0H16L10 6V15.5L6 13.5V6Z" fill="#5f6166"/></svg>
<div class="a t th" style="left:513px">Activity</div>
<svg class="a" style="left:644px;top:431px" width="16" height="16" viewBox="0 0 16 16"><path d="M0 0H16L10 6V15.5L6 13.5V6Z" fill="#5f6166"/></svg>
<div class="a t th" style="left:691px">Date</div>
<svg class="a" style="left:821px;top:431px" width="16" height="16" viewBox="0 0 16 16"><path d="M0 0H16L10 6V15.5L6 13.5V6Z" fill="#5f6166"/></svg>
<div class="a t th" style="left:868px">Paid Duration</div>
<svg class="a" style="left:1028px;top:431px" width="16" height="16" viewBox="0 0 16 16"><path d="M0 0H16L10 6V15.5L6 13.5V6Z" fill="#5f6166"/></svg>
<div class="a t th" style="left:1075px">Reg Hours</div>
<svg class="a" style="left:1209px;top:431px" width="16" height="16" viewBox="0 0 16 16"><path d="M0 0H16L10 6V15.5L6 13.5V6Z" fill="#5f6166"/></svg>
<div class="a t th" style="left:1256px">OT Hours</div>
<svg class="a" style="left:1386px;top:431px" width="16" height="16" viewBox="0 0 16 16"><path d="M0 0H16L10 6V15.5L6 13.5V6Z" fill="#5f6166"/></svg>
<div class="a t th" style="left:1433px">DT Hours</div>
<div class="a t td" style="left:107px;top:497px">Anthony Pitcher</div>
<div class="a t td" style="left:336px;top:497px">A0HC</div>
<div class="a t td" style="left:513px;top:497px">Activity</div>
<div class="a t td" style="left:691px;top:497px;letter-spacing:0.35px">3/30/2026</div>
<div class="a t td" style="left:868px;top:497px;letter-spacing:0.35px">4.50000</div>
<div class="a t td" style="left:1075px;top:497px;letter-spacing:0.35px">4.50000</div>
<div class="a t td" style="left:1256px;top:497px;letter-spacing:0.35px">0.00000</div>
<div class="a t td" style="left:1433px;top:497px;letter-spacing:0.35px">0.00000</div>
<div class="a t td" style="left:107px;top:578px">Anthony Pitcher</div>
<div class="a t td" style="left:336px;top:578px">A0HC</div>
<div class="a t td" style="left:513px;top:578px">Idle</div>
<div class="a t td" style="left:691px;top:578px;letter-spacing:0.35px">3/31/2026</div>
<div class="a t td" style="left:868px;top:578px;letter-spacing:0.35px">0.01667</div>
<div class="a t td" style="left:1075px;top:578px;letter-spacing:0.35px">0.01667</div>
<div class="a t td" style="left:1256px;top:578px;letter-spacing:0.35px">0.00000</div>
<div class="a t td" style="left:1433px;top:578px;letter-spacing:0.35px">0.00000</div>
<div class="a t td" style="left:107px;top:659px">Anthony Pitcher</div>
<div class="a t td" style="left:336px;top:659px">A0HC</div>
<div class="a t td" style="left:513px;top:659px">Activity</div>
<div class="a t td" style="left:691px;top:659px;letter-spacing:0.35px">4/1/2026</div>
<div class="a t td" style="left:868px;top:659px;letter-spacing:0.35px">1.56667</div>
<div class="a t td" style="left:1075px;top:659px;letter-spacing:0.35px">1.56667</div>
<div class="a t td" style="left:1256px;top:659px;letter-spacing:0.35px">0.00000</div>
<div class="a t td" style="left:1433px;top:659px;letter-spacing:0.35px">0.00000</div>
<div class="a t td" style="left:107px;top:740px">Anthony Pitcher</div>
<div class="a t td" style="left:336px;top:740px">A0HC</div>
<div class="a t td" style="left:513px;top:740px">Idle</div>
<div class="a t td" style="left:691px;top:740px;letter-spacing:0.35px">4/1/2026</div>
<div class="a t td" style="left:868px;top:740px;letter-spacing:0.35px">0.01667</div>
<div class="a t td" style="left:1075px;top:740px;letter-spacing:0.35px">0.01667</div>
<div class="a t td" style="left:1256px;top:740px;letter-spacing:0.35px">0.00000</div>
<div class="a t td" style="left:1433px;top:740px;letter-spacing:0.35px">0.00000</div>
<div class="a" style="left:1545px;top:467px;width:10px;height:400px;background:#e6e6e6"></div>
<div class="a" style="left:1545px;top:467px;width:10px;height:69px;background:#ababab"></div>
<div class="a" style="left:671px;top:779px;width:49px;height:9px;border-radius:5px;background:#7e7e7e"></div>
</div>
<div class="a" style="left:25px;top:630px;width:375px;height:375px;overflow:hidden"><div class="a" style="left:0;top:0;width:375px;height:375px;border-radius:50%;background:#8a8a8b;box-shadow:0 0 16px rgba(0,0,0,0.25)"></div></div>
<svg class="a" style="left:182px;top:790px" width="60" height="56" viewBox="0 0 60 56"><path d="M6 15.1H14L20 9.8H41L46 15.1H55.3V45H6Z" fill="none" stroke="#fff" stroke-width="4.1"/><circle cx="30.6" cy="27.8" r="9.8" fill="none" stroke="#fff" stroke-width="4"/><path d="M5 52.6L55.8 2.2" stroke="#fff" stroke-width="4"/></svg>
<div id="taskbar" class="a">
  <div class="a" style="left:0;top:0;width:1920px;height:2px;background:#45474a"></div>
  <!-- weather -->
  <svg class="a" style="left:24px;top:17px" width="34" height="24" viewBox="0 0 34 24"><defs><linearGradient id="cl" x1="0" y1="0" x2="0" y2="1"><stop offset="0" stop-color="#eef4ff"/><stop offset="1" stop-color="#9fb5e6"/></linearGradient></defs><path d="M7 22C3 22 1 19.5 1 17S3 12 7 12C8 7 12 5 16 5S24 8 25 12C29 12 32 14.5 32 17.5S29 22 26 22Z" fill="url(#cl)"/></svg>
  <div class="a" style="left:40px;top:9px;width:20px;height:20px;border-radius:50%;background:#f49aa8;color:#1a1a1a;font-size:13px;line-height:20px;text-align:center">2</div>
  <!-- windows -->
  <svg class="a" style="left:261px;top:16px" width="30" height="30" viewBox="0 0 30 30"><defs><linearGradient id="wn" x1="0" y1="0" x2="1" y2="1"><stop offset="0" stop-color="#7fd8ff"/><stop offset="1" stop-color="#1b8fef"/></linearGradient></defs><rect x="0" y="0" width="14.2" height="14.2" rx="1" fill="url(#wn)"/><rect x="15.8" y="0" width="14.2" height="14.2" rx="1" fill="url(#wn)"/><rect x="0" y="15.8" width="14.2" height="14.2" rx="1" fill="url(#wn)"/><rect x="15.8" y="15.8" width="14.2" height="14.2" rx="1" fill="url(#wn)"/></svg>
  <!-- search -->
  <div class="a" style="left:307px;top:10px;width:275px;height:40px;border-radius:20px;background:linear-gradient(90deg,#3b3a35,#3e4342);border:1px solid #4a4a46"></div>
  <svg class="a" style="left:321px;top:21px" width="20" height="20" viewBox="0 0 20 20"><circle cx="8" cy="8" r="6.2" fill="none" stroke="#e6e6e6" stroke-width="1.8"/><path d="M12.5 12.5L18 18" stroke="#e6e6e6" stroke-width="2" stroke-linecap="round"/></svg>
  <div class="a t" style="left:353px;top:21px;font-size:16.5px;color:#e0e0e0">Search</div>
  <!-- task view -->
  <div class="a" style="left:597px;top:25px;width:23px;height:21px;border-radius:2px;background:#6b6b6b"></div>
  <div class="a" style="left:604px;top:16px;width:23px;height:20px;border-radius:2px;background:#eaeaea"></div>
  <div class="a" style="left:604px;top:25px;width:16px;height:11px;background:#b8b8b8"></div>
  <!-- edge -->
  <svg class="a" style="left:652px;top:16px" width="30" height="30" viewBox="0 0 30 30"><defs><linearGradient id="ed" x1="0" y1="0" x2="1" y2="1"><stop offset="0" stop-color="#35c1f1"/><stop offset=".5" stop-color="#1a8fdc"/><stop offset="1" stop-color="#0c59a4"/></linearGradient><linearGradient id="ed2" x1="0" y1="0" x2="1" y2="0"><stop offset="0" stop-color="#47d46a"/><stop offset="1" stop-color="#7fe36b"/></linearGradient></defs><circle cx="15" cy="15" r="14.5" fill="url(#ed)"/><path d="M29 15C29 8 23 3 16 3 10 3 5 7 4 12 7 8 12 7 17 9 22 11 22 17 18 18 22 20 28 19 29 15Z" fill="url(#ed2)"/><ellipse cx="15" cy="17" rx="5" ry="3.5" fill="#1d2a36"/></svg>
  <!-- explorer -->
  <svg class="a" style="left:707px;top:17px" width="30" height="28" viewBox="0 0 30 28"><path d="M0 3C0 1.5 1 1 2 1H10L13 4H28C29 4 30 5 30 6V26C30 27 29 28 28 28H2C1 28 0 27 0 26Z" fill="#e8b23a"/><path d="M0 8H30V26C30 27 29 28 28 28H2C1 28 0 27 0 26Z" fill="#fcd462"/><rect x="6" y="20" width="18" height="8" rx="1" fill="#1f7fd6"/><rect x="10" y="23" width="10" height="1.5" fill="#fcd462"/></svg>
  <!-- L -->
  <div class="a" style="left:762px;top:15px;width:30px;height:30px;background:#e0201b;color:#fff;font-weight:bold;font-size:22px;line-height:30px;text-align:center">L</div>
  <!-- spotify -->
  <svg class="a" style="left:817px;top:16px" width="30" height="30" viewBox="0 0 30 30"><circle cx="15" cy="15" r="14.5" fill="#1ed760"/><path d="M6.5 11C12 9 18.5 9.5 23.5 12M7.5 15.5C12 14 17.5 14.3 21.8 16.6M8.5 19.8C12 18.8 16 19 19.5 20.8" fill="none" stroke="#121212" stroke-width="2.4" stroke-linecap="round"/></svg>
  <!-- chrome active -->
  <div class="a" style="left:862px;top:5px;width:50px;height:50px;border-radius:5px;background:#34332e;border:1px solid #3f3e38"></div>
  <svg class="a" style="left:872px;top:16px" width="30" height="30" viewBox="0 0 30 30" class="chr"><circle cx="15" cy="15" r="14.5" fill="#db4437"/><path d="M15 15L2.4 7.7A14.5 14.5 0 0 0 15 29.5Z" fill="#0f9d58"/><path d="M15 15L15 29.5A14.5 14.5 0 0 0 27.6 7.7Z" fill="#ffcd40"/><path d="M15 15L2.4 7.7 8 2.5 15 .5 22 2.5 27.6 7.7Z" fill="#db4437"/><circle cx="15" cy="15" r="6.8" fill="#fff"/><circle cx="15" cy="15" r="5.3" fill="#4285f4"/></svg>
  <div class="a" style="left:888px;top:9px;width:20px;height:20px;border-radius:50%;background:#e2457b;color:#fff;font-size:11px;line-height:20px;text-align:center">T</div>
  <div class="a" style="left:877px;top:50px;width:20px;height:4px;border-radius:2px;background:#4cc2ff"></div>
  <!-- outlook -->
  <svg class="a" style="left:927px;top:16px" width="30" height="30" viewBox="0 0 30 30"><path d="M8 10L19 2 30 10V26C30 27 29 28 28 28H10Z" fill="#28a8ea"/><path d="M8 10L19 18 30 10V26C30 27 29 28 28 28H10C9 28 8 27 8 26Z" fill="#0078d4"/><rect x="0" y="12" width="14" height="14" rx="2" fill="#0a5cbf"/><circle cx="7" cy="19" r="3.6" fill="none" stroke="#fff" stroke-width="2"/></svg>
  <!-- copilot -->
  <svg class="a" style="left:983px;top:17px" width="29" height="26" viewBox="0 0 29 26"><defs><linearGradient id="cpaa" x1="0" y1="0" x2="0" y2="1"><stop offset="0" stop-color="#1fb8ff"/><stop offset=".5" stop-color="#3cb07a"/><stop offset="1" stop-color="#f5c800"/></linearGradient><linearGradient id="cpab" x1="0" y1="0" x2="0" y2="1"><stop offset="0" stop-color="#b04ae8"/><stop offset=".5" stop-color="#f05a8c"/><stop offset="1" stop-color="#ffb347"/></linearGradient></defs><path d="M13 0.5H19C20.5 0.5 21.5 1.5 22 3L23 6.1H15.5Z" fill="#1a4fd8"/><path d="M6.8 18H13L11.5 24.4H10C8.5 24.4 7.5 23.5 7.2 22Z" fill="#e8502a"/><path d="M5.5 0.5H16L10.5 18H3C1 18 0 16.5 0.5 14.5L3.5 3C4 1.5 4.5 0.5 5.5 0.5Z" fill="url(#cpaa)"/><path d="M18 6.1H25C27 6.1 28.3 7.8 27.8 9.8L24.8 21C24.3 23 23 24.4 21 24.4H12Z" fill="url(#cpab)"/></svg>
  <!-- file -->
  <svg class="a" style="left:1041px;top:16px" width="22" height="29" viewBox="0 0 22 29"><path d="M0 0H15L22 7V29H0Z" fill="#f4f4f4"/><path d="M15 0V7H22Z" fill="#c9c9c9"/></svg>
  <!-- onenote -->
  <svg class="a" style="left:1092px;top:16px" width="30" height="30" viewBox="0 0 30 30"><rect x="8" y="2" width="22" height="26" rx="1.5" fill="#ca64ea"/><rect x="20" y="2" width="10" height="8.6" fill="#e6a9f5"/><rect x="20" y="10.6" width="10" height="8.6" fill="#ae4bd5"/><rect x="20" y="19.2" width="10" height="8.8" fill="#7719aa"/><rect x="0" y="7" width="16" height="16" rx="1.5" fill="#7719aa"/><path d="M4 19V11H5.5L10 17V11H12V19H10.5L6 13V19Z" fill="#fff"/></svg>
  <!-- todo -->
  <svg class="a" style="left:1147px;top:17px" width="30" height="30" viewBox="0 0 30 30"><path d="M2 16L9 23 27 5" fill="none" stroke="#3b8ef0" stroke-width="5" stroke-linecap="round" stroke-linejoin="round"/><path d="M2 16L9 23" stroke="#185abd" stroke-width="5" stroke-linecap="round"/></svg>
  <div class="a" style="left:1164px;top:9px;width:19px;height:19px;border-radius:50%;background:#4cc2ff;color:#0a1a28;font-size:13px;line-height:19px;text-align:center">3</div>
  <!-- scanner -->
  <svg class="a" style="left:1202px;top:15px" width="30" height="30" viewBox="0 0 30 30"><rect width="30" height="30" fill="#2d73e6"/><path d="M5 4L24 16" stroke="#fff" stroke-width="2"/><rect x="3" y="18" width="17" height="2" fill="#fff"/><rect x="2" y="22" width="26" height="1.2" fill="#fff"/><rect x="3" y="25" width="2" height="1.6" fill="#fff"/></svg>
  <!-- m365 -->
  <svg class="a" style="left:1257px;top:17px" width="29" height="26" viewBox="0 0 29 26"><defs><linearGradient id="cpba" x1="0" y1="0" x2="0" y2="1"><stop offset="0" stop-color="#1fb8ff"/><stop offset=".5" stop-color="#3cb07a"/><stop offset="1" stop-color="#f5c800"/></linearGradient><linearGradient id="cpbb" x1="0" y1="0" x2="0" y2="1"><stop offset="0" stop-color="#b04ae8"/><stop offset=".5" stop-color="#f05a8c"/><stop offset="1" stop-color="#ffb347"/></linearGradient></defs><path d="M13 0.5H19C20.5 0.5 21.5 1.5 22 3L23 6.1H15.5Z" fill="#1a4fd8"/><path d="M6.8 18H13L11.5 24.4H10C8.5 24.4 7.5 23.5 7.2 22Z" fill="#e8502a"/><path d="M5.5 0.5H16L10.5 18H3C1 18 0 16.5 0.5 14.5L3.5 3C4 1.5 4.5 0.5 5.5 0.5Z" fill="url(#cpba)"/><path d="M18 6.1H25C27 6.1 28.3 7.8 27.8 9.8L24.8 21C24.3 23 23 24.4 21 24.4H12Z" fill="url(#cpbb)"/></svg><svg class="a" style="left:1266px;top:38px" width="22" height="9" viewBox="0 0 22 9"><rect width="22" height="9" rx="1.5" fill="#111"/><text x="11" y="7.3" font-size="7" font-weight="bold" fill="#fff" text-anchor="middle" font-family="Liberation Sans">M365</text></svg>
  <!-- notion -->
  <svg class="a" style="left:1312px;top:15px" width="30" height="30" viewBox="0 0 30 30"><path d="M4 1.5H23L28.5 6V28.5H7L1.5 24V4Z" fill="#fff" stroke="#111" stroke-width="2"/><path d="M5.5 3.5L10 7.5H27" fill="none" stroke="#111" stroke-width="1.5"/><path d="M9 11H13L20 21V13H18V11H24V13H22.5V26H19.5L12 15.5V23.5H14V25.5H8.5V23.5H10V13H9Z" fill="#111"/></svg>
  <!-- claude -->
  <svg class="a" style="left:1366px;top:14px" width="33" height="33" viewBox="0 0 33 33"><path d="M16.5 16.0L10.2 2.9M16.5 16.0L18.2 3.3M16.5 16.0L25.0 6.2M16.5 16.0L5.2 8.3M16.5 16.0L29.0 13.9M16.5 16.0L2.8 15.6M16.5 16.0L29.0 18.7M16.5 16.0L5.9 22.7M16.5 16.0L26.1 24.8M16.5 16.0L8.8 26.6M16.5 16.0L15.2 28.9M16.5 16.0L22.8 26.6" stroke="#e07a53" stroke-width="2.1" stroke-linecap="round"/><circle cx="16.5" cy="16" r="3.6" fill="#e07a53"/></svg>
  <div class="a" style="left:1378px;top:51px;width:8px;height:3px;border-radius:2px;background:#8a8f95"></div>
  <!-- chrome 2 -->
  <svg class="a" style="left:1422px;top:16px" width="30" height="30" viewBox="0 0 30 30"><circle cx="15" cy="15" r="14.5" fill="#db4437"/><path d="M15 15L2.4 7.7A14.5 14.5 0 0 0 15 29.5Z" fill="#0f9d58"/><path d="M15 15L15 29.5A14.5 14.5 0 0 0 27.6 7.7Z" fill="#ffcd40"/><circle cx="15" cy="15" r="6.8" fill="#fff"/><circle cx="15" cy="15" r="5.3" fill="#4285f4"/></svg>
  <div class="a" style="left:1438px;top:9px;width:20px;height:20px;border-radius:50%;background:#e2457b;color:#fff;font-size:11px;line-height:20px;text-align:center">T</div>
  <div class="a" style="left:1433px;top:51px;width:8px;height:3px;border-radius:2px;background:#8a8f95"></div>
  <!-- G -->
  <div class="a" style="left:1480px;top:17px;width:25px;height:25px;border-radius:5px;background:#3b1a9e"></div>
  <div class="a t" style="left:1484px;top:17px;font-size:22px;font-weight:bold;color:#fff">G</div>
  <div class="a" style="left:1488px;top:51px;width:8px;height:3px;border-radius:2px;background:#8a8f95"></div>
  <!-- tray -->
  <svg class="a" style="left:1603px;top:25px" width="16" height="10" viewBox="0 0 16 10"><path d="M1.5 8.5L8 2 14.5 8.5" fill="none" stroke="#fff" stroke-width="1.8"/></svg>
  <svg class="a" style="left:1641px;top:21px" width="20" height="19" viewBox="0 0 20 19"><path d="M3 3L6 1 9 3 6 5ZM11 3L14 1 17 3 14 5Z" fill="#fff"/><rect x="0" y="6" width="20" height="13" rx="2" fill="#e2141f"/><text x="10" y="16.5" font-size="9.5" font-weight="bold" fill="#fff" text-anchor="middle" font-family="Liberation Sans">12</text></svg>
  <svg class="a" style="left:1683px;top:20px" width="16" height="21" viewBox="0 0 16 21"><rect x="4.5" y="1" width="7" height="12" rx="3.5" fill="none" stroke="#7cc7ec" stroke-width="1.8"/><path d="M1.5 9A6.5 6.5 0 0 0 14.5 9M8 15.5V20" fill="none" stroke="#7cc7ec" stroke-width="1.8"/></svg>
  <svg class="a" style="left:1720px;top:22px" width="22" height="17" viewBox="0 0 22 17"><path d="M1 6A14 14 0 0 1 21 6M4 9.5A9.5 9.5 0 0 1 18 9.5M7 12.8A5 5 0 0 1 15 12.8" fill="none" stroke="#fff" stroke-width="1.8" stroke-linecap="round"/><circle cx="11" cy="15.5" r="1.5" fill="#fff"/></svg>
  <svg class="a" style="left:1751px;top:22px" width="21" height="17" viewBox="0 0 21 17"><path d="M1 5.5H4.5L9 1.5V15.5L4.5 11.5H1Z" fill="none" stroke="#fff" stroke-width="1.6" stroke-linejoin="round"/><path d="M12.5 5.5L18.5 11.5M18.5 5.5L12.5 11.5" stroke="#fff" stroke-width="1.6"/></svg>
  <svg class="a" style="left:1781px;top:20px" width="26" height="21" viewBox="0 0 26 21"><rect x="1" y="6" width="22" height="12" rx="3" fill="#8fce88" stroke="#fff" stroke-width="1.6"/><rect x="23.5" y="10" width="2" height="4" rx="1" fill="#fff"/><path d="M13 1L9 9H12L11 13 15 6H12Z" fill="#fff"/></svg>
  <div class="a t" style="left:1840px;top:11px;font-size:15px;color:#fff">9:37 AM</div>
  <div class="a t" style="left:1827px;top:31px;font-size:15px;color:#fff">4/13/2026</div>
</div>
</body></html>
